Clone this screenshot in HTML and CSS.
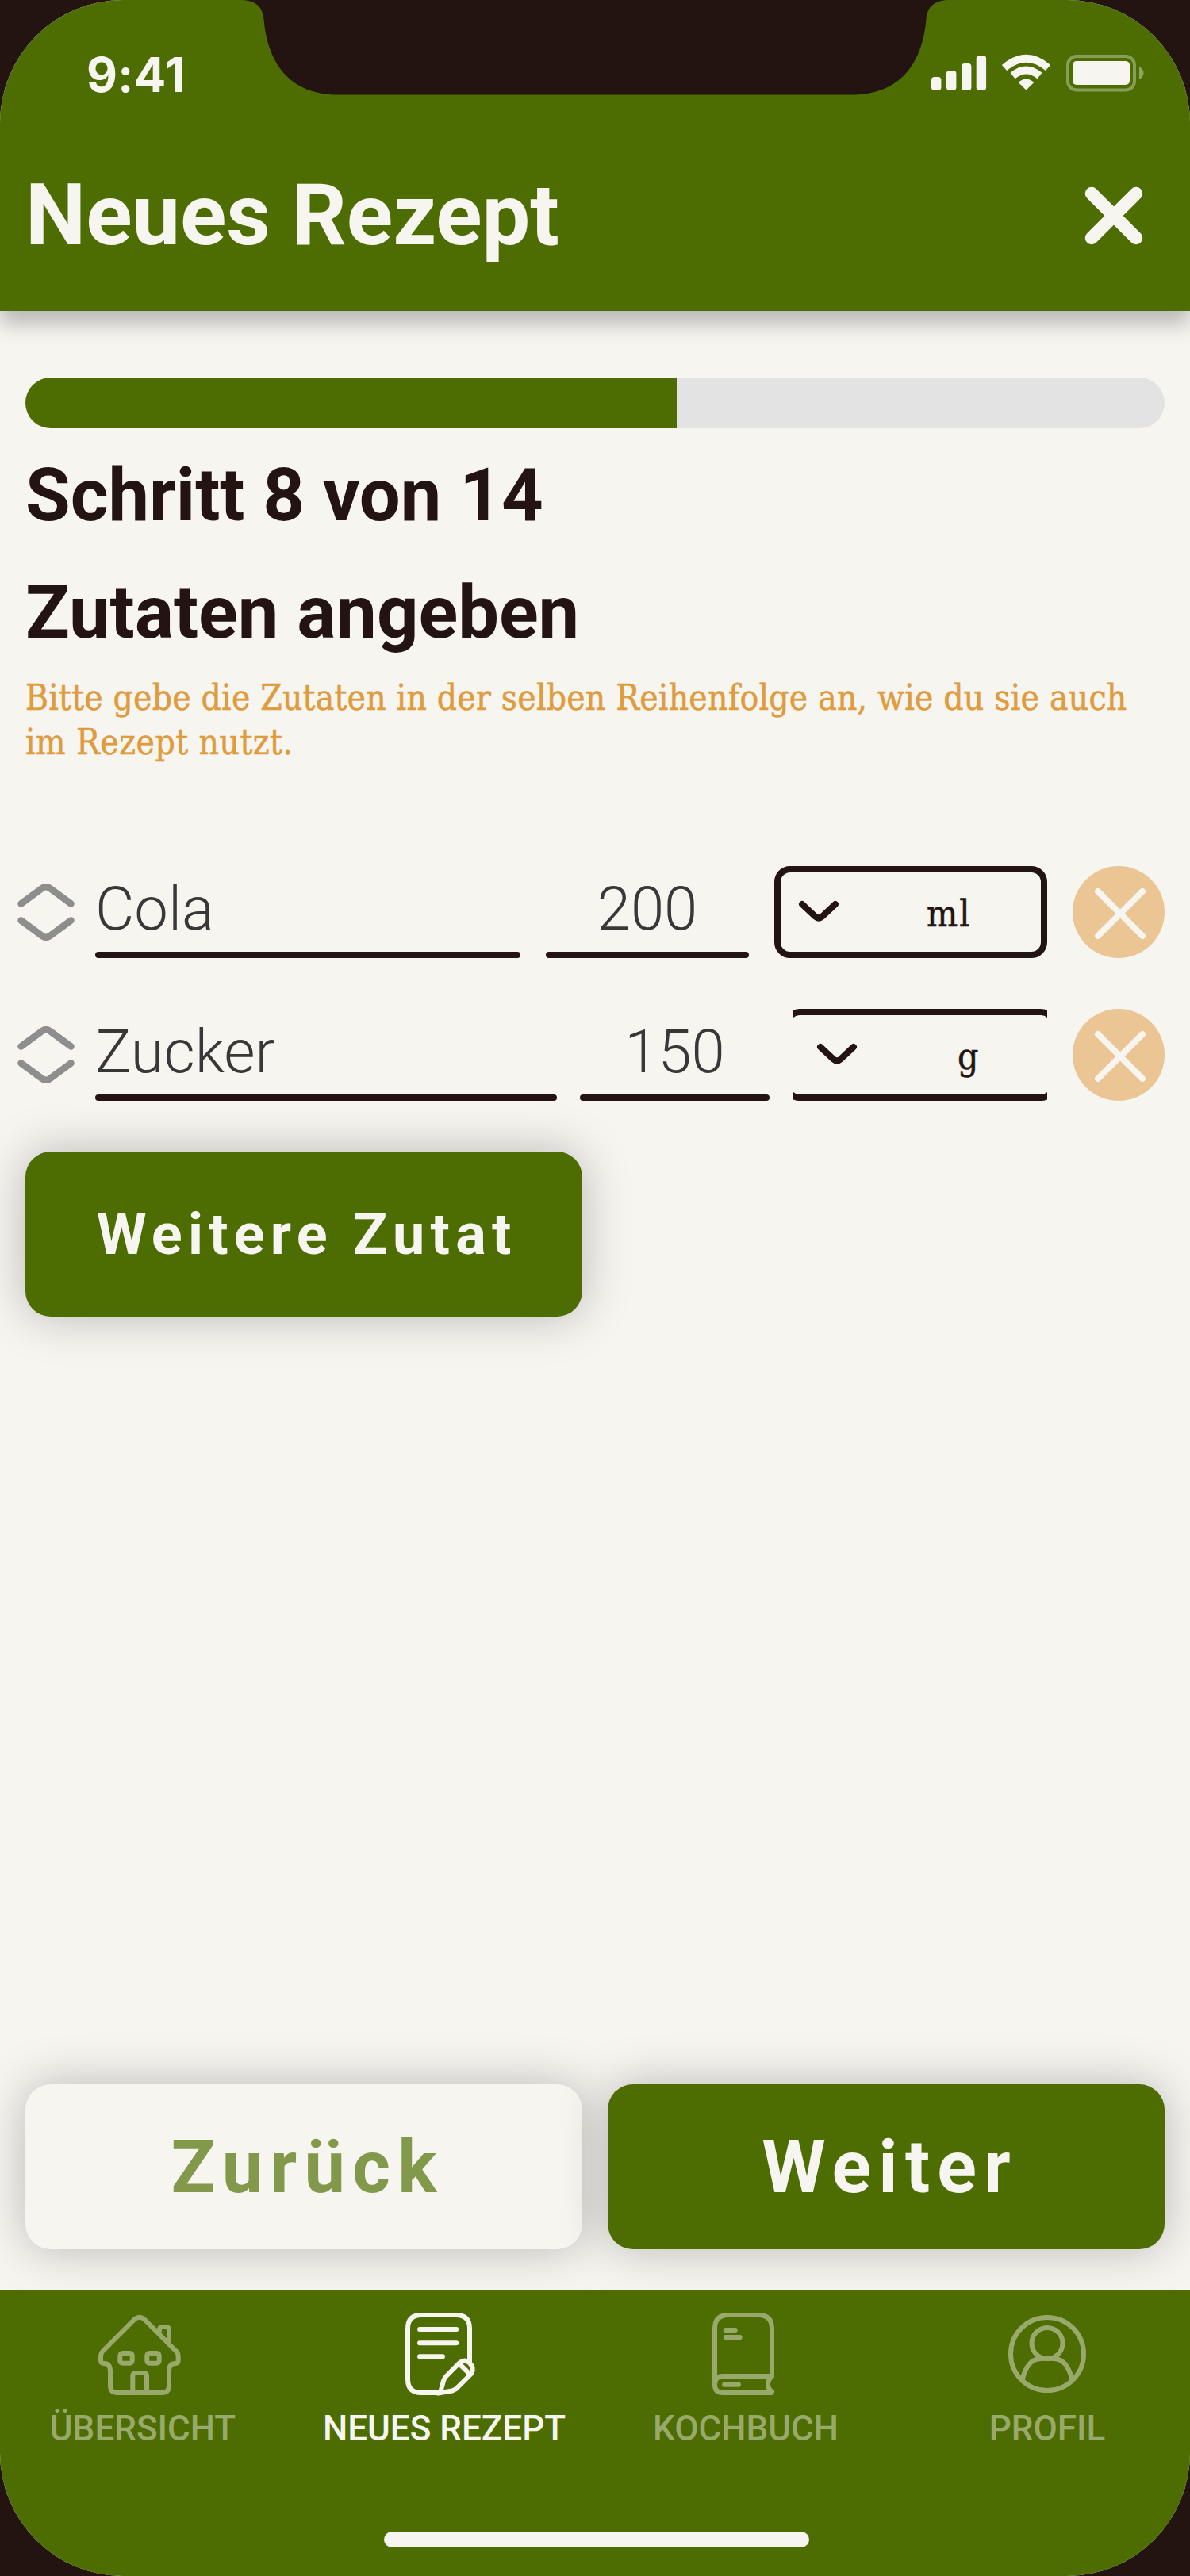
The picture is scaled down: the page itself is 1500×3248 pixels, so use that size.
FILE: index.html
```html
<!DOCTYPE html>
<html lang="de">
<head>
<meta charset="utf-8">
<title>Neues Rezept</title>
<link rel="stylesheet" href="styles.css">
</head>
<body>
<div class="phone">
  <header class="header">
    <svg class="notch" width="900" height="120" viewBox="300 0 900 120" aria-hidden="true"><path fill="#231411" d="M306 0C322 1 331 8 332.500 24C337 78 364 119.500 426 119.500H1074C1136 119.500 1163 78 1167.500 24C1169 8 1178 1 1194 0Z"/></svg>
    <div class="status">
      <span class="time">9:41</span>
      <svg class="status-icons" width="270" height="48" viewBox="1173 68 270 48" fill="#f6f5f0">
        <rect x="1174" y="97" width="12.400" height="17" rx="4"/><rect x="1193" y="89" width="12.400" height="25" rx="4"/><rect x="1212" y="80" width="12.400" height="34" rx="4"/><rect x="1230.700" y="70" width="12.400" height="44" rx="4"/>
        <path d="M1293.500 113.500L1283.700 104Q1293.500 95 1303.300 104Z"/>
        <g fill="none" stroke="#f6f5f0" stroke-width="9.500"><path d="M1276.500 95.500Q1293.500 81.500 1310.500 95.500"/><path d="M1266 85.500Q1293.500 62 1321 85.500"/></g>
        <rect x="1346" y="71" width="84" height="42.500" rx="11" fill="none" stroke="#f6f5f0" stroke-width="4" opacity=".35"/>
        <rect x="1352" y="77" width="72" height="30" rx="5"/><path opacity=".4" d="M1436 84Q1441.500 87 1441.500 92T1436 100Z"/>
      </svg>
    </div>
    <div class="titlebar">
      <h1>Neues Rezept</h1>
      <svg class="close" width="74" height="74" viewBox="0 0 74 74"><path d="M9 9L65 65M65 9L9 65" stroke="#f6f5f0" stroke-width="16.500" stroke-linecap="round"/></svg>
    </div>
  </header>

  <main class="content">
    <div class="progress"><div class="progress-fill" style="width:57.143%"></div></div>
    <h2>Schritt 8 von 14</h2>
    <h2>Zutaten angeben</h2>
    <p class="hint"><span class="hint-a">Bitte gebe die Zutaten in der selben Reihenfolge an, wie du sie auch</span><br><span class="hint-b">im Rezept nutzt.</span></p>

    <div class="row row-a">
      <svg class="sort" width="72" height="72" viewBox="0 0 72 72"><path d="M4.500 25.500L31 6Q36 2.500 41 6L67.500 25.500M4.500 46.500L31 66Q36 69.500 41 66L67.500 46.500"/></svg>
      <div class="field name">Cola</div>
      <div class="field amount">200</div>
      <div class="select"><svg class="chev" width="52" height="28" viewBox="0 0 52 28"><path d="M5 5L21.500 20.500Q26 24.500 30.500 20.500L47 5"/></svg><span>ml</span></div>
      <div class="remove"><svg width="66" height="66" viewBox="0 0 66 66"><path d="M5 5L61 61M61 5L5 61"/></svg></div>
    </div>
    <div class="row row-b">
      <svg class="sort" width="72" height="72" viewBox="0 0 72 72"><path d="M4.500 25.500L31 6Q36 2.500 41 6L67.500 25.500M4.500 46.500L31 66Q36 69.500 41 66L67.500 46.500"/></svg>
      <div class="field name">Zucker</div>
      <div class="field amount">150</div>
      <div class="select select-open"><svg class="chev" width="52" height="28" viewBox="0 0 52 28"><path d="M5 5L21.500 20.500Q26 24.500 30.500 20.500L47 5"/></svg><span>g</span></div>
      <div class="remove"><svg width="66" height="66" viewBox="0 0 66 66"><path d="M5 5L61 61M61 5L5 61"/></svg></div>
    </div>

    <div class="btn btn-add"><span>Weitere Zutat</span></div>
    <div class="actions">
      <div class="btn btn-back"><span>Zurück</span></div>
      <div class="btn btn-next"><span>Weiter</span></div>
    </div>
  </main>

  <nav class="nav">
    <div class="tab">
      <svg width="120" height="110" viewBox="120 2915 120 110">
        <path d="M139 3008V2990Q139 2980 131 2980Q127 2980 127 2976V2971Q127 2967 130 2964L170 2924Q175.700 2919.500 181.500 2924L221.500 2964Q224.700 2967 224.700 2971V2976Q224.700 2980 221 2980Q213 2980 213 2990V3008Q213 3017 204 3017H148Q139 3017 139 3008Z"/>
        <path d="M200.700 2943V2939Q200.700 2934 205 2934H209Q213 2934 213 2938V2955"/>
        <rect x="151.300" y="2967" width="15.400" height="12.700" rx="3"/><rect x="185.300" y="2967" width="15.400" height="12.700" rx="3"/>
        <path d="M167.300 3016V2996Q167.300 2992 171.300 2992H181Q185 2992 185 2996V3016"/>
      </svg>
      <span>ÜBERSICHT</span>
    </div>
    <div class="tab active">
      <svg width="120" height="110" viewBox="500 2915 120 110">
        <path d="M592 2978V2936Q592 2919 575 2919H531Q514 2919 514 2936V3000Q514 3017 531 3017H555"/>
        <path d="M529 2937H575.300M529 2954.200H575.300M529 2971.300H558"/>
        <path d="M555 3017L559 3002Q560 2998.500 562.500 2996L579.500 2979Q585.500 2974 591.500 2979Q598.500 2985.500 594 2993L577 3010Q574 3013.500 570 3014.500ZM579.500 2981L592 2993.300"/>
      </svg>
      <span>NEUES REZEPT</span>
    </div>
    <div class="tab">
      <svg width="120" height="110" viewBox="880 2915 120 110">
        <path d="M901 3006V2936Q901 2919 918 2919H956Q973 2919 973 2936V2996Q968 3001 968 3006.500T973 3015.500"/>
        <path d="M973 2996H911Q901 2996 901 3006.500T911 3017H972.500"/>
        <path d="M914.700 2938H926.700M914.700 2947H932.700M913 3006.700H931"/>
      </svg>
      <span>KOCHBUCH</span>
    </div>
    <div class="tab">
      <svg width="120" height="110" viewBox="1260 2915 120 110">
        <circle cx="1320" cy="2968" r="46"/><circle cx="1320" cy="2954.500" r="19.500"/>
        <path d="M1289 2999C1293 2984 1299 2976 1308 2974.500Q1320 2972.500 1332 2974.500C1341 2976 1347 2984 1351 2999"/>
      </svg>
      <span>PROFIL</span>
    </div>
    <div class="home-indicator"></div>
  </nav>
</div>
</body>
</html>
```
FILE: styles.css
```css
* { box-sizing: border-box; }
body { margin: 0; background: #231411; font-family: Roboto, sans-serif; }
.phone { width: 1500px; height: 3248px; background: #f6f5f0; border-radius: 155px; overflow: hidden; display: flex; flex-direction: column; }
.header { position: relative; height: 392px; background: #4d6d02; color: #f6f5f0; box-shadow: 0 16px 24px rgba(0,0,0,.25); display: flex; flex-direction: column; }
.notch { position: absolute; left: 300px; top: 0; }
.status { height: 192px; padding: 68px 57px 0 109px; display: flex; justify-content: space-between; align-items: flex-start; }
.time { font: 650 60px/53px Inter, sans-serif; letter-spacing: .4px; }
.titlebar { height: 160px; padding: 0 59px 0 32px; display: flex; justify-content: space-between; align-items: center; }
h1 { margin: -2px 0 0; font-size: 108px; line-height: 128px; font-weight: 700; }
.content { flex: 1; padding: 84px 32px 52px; display: flex; flex-direction: column; }
.progress { height: 64px; border-radius: 32px; background: #e3e3e3; overflow: hidden; }
.progress-fill { height: 64px; background: #4d6d02; }
h2 { margin: 31px 0 0; font-size: 92px; line-height: 108px; font-weight: 700; color: #231411; }
h2 + h2 { margin-top: 40px; }
.hint { margin: 25px 0 0; height: 112px; font-family: "DejaVu Serif Condensed", "DejaVu Serif", serif; font-stretch: condensed; font-size: 44px; line-height: 56px; color: #e09b3d; white-space: nowrap; -webkit-text-stroke: .5px #e09b3d; }
.hint-a { letter-spacing: .18px; }
.hint-b { letter-spacing: .45px; }
.row { display: flex; height: 116px; margin-left: -10px; align-items: flex-start; }
.row-a { margin-top: 128px; }
.row-b { margin-top: 64px; }
.sort { margin: 22px 26px 0 0; fill: none; stroke: #8e8e8e; stroke-width: 8.5; stroke-linecap: round; }
.field { position: relative; height: 116px; font-size: 76px; line-height: 90px; font-weight: 300; color: #383838; padding-top: 9px; }
.field::after { content: ""; position: absolute; left: 0; right: 0; bottom: 0; height: 8px; border-radius: 4px; background: #231411; }
.amount { text-align: center; }
.row-a .name { width: 536px; margin-right: 32px; }
.row-a .amount { width: 256px; margin-right: 32px; }
.row-b .name { width: 582px; margin-right: 29px; }
.row-b .amount { width: 239px; margin-right: 18px; }
.select { width: 344px; height: 116px; border: 8px solid #231411; border-radius: 20px; margin-right: 32px; display: flex; padding: 35px 0 0 22px; color: #231411; font: 46px/50px "DejaVu Serif Condensed", "DejaVu Serif", serif; font-stretch: condensed; -webkit-text-stroke: .5px #231411; }
.select-open { clip-path: inset(0 12px); margin-right: 20px; padding-left: 33px; }
.chev { fill: none; stroke: #231411; stroke-width: 8; stroke-linecap: round; }
.select span { margin: -8px 0 0 110px; letter-spacing: 2px; }
.select-open span { margin-left: 126px; }
.remove { width: 116px; height: 116px; border-radius: 50%; background: #ebc593; padding: 27px 0 0 27px; }
.remove svg { display: block; stroke: #f6f5f0; stroke-width: 8; stroke-linecap: round; }
.btn { height: 208px; width: 702px; border-radius: 32px; box-shadow: 0 0 60px rgba(0,0,0,.25); display: flex; justify-content: center; align-items: center; font-size: 92px; font-weight: 700; letter-spacing: .1em; padding-left: .1em; background: #4d6d02; color: #f6f5f0; }
.btn-add { margin-top: 64px; font-size: 72px; }
.actions { margin-top: auto; display: flex; gap: 32px; }
.btn-back { background: #f6f5f0; color: #82984b; }
.nav { position: relative; height: 360px; background: #4d6d02; color: #98a96b; display: flex; padding: 27px 0 0; }
.tab { flex: 0 0 380px; display: flex; flex-direction: column; align-items: center; font-size: 44px; font-weight: 500; line-height: 52px; margin-left: -10px; margin-right: 10px; }
.tab svg { display: block; fill: none; stroke: currentColor; stroke-width: 6; stroke-linecap: round; margin-bottom: 11px; }
.active { color: #f6f5f0; }
.home-indicator { position: absolute; left: 484px; top: 304px; width: 536px; height: 20px; border-radius: 10px; background: #f6f5f0; }
```
